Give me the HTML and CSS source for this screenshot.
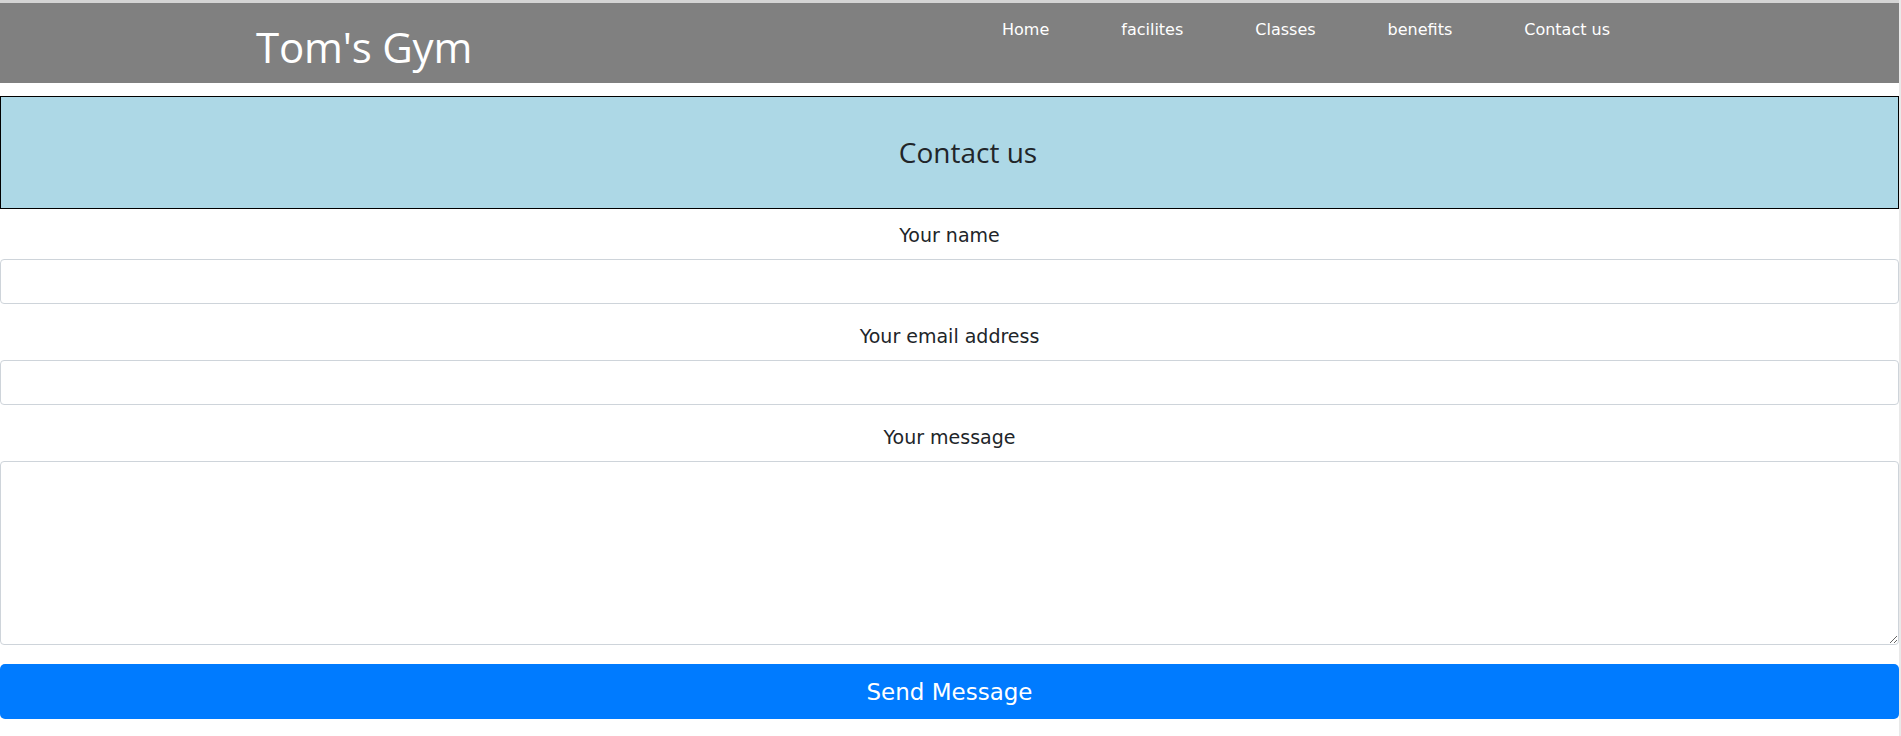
FILE: index.html
```html
<!DOCTYPE html>
<html lang="en">
<head>
<meta charset="utf-8">
<title>Tom's Gym - Contact us</title>
<link rel="stylesheet" href="styles.css">
</head>
<body>
<div class="page">
  <header class="site-header">
    <div class="logo">Tom's Gym</div>
    <nav class="nav">
      <a href="#">Home</a>
      <a href="#">facilites</a>
      <a href="#">Classes</a>
      <a href="#">benefits</a>
      <a href="#">Contact us</a>
    </nav>
  </header>
  <section class="banner">
    <h2 class="banner-title">Contact us</h2>
  </section>
  <form class="contact-form">
    <div class="group">
      <label class="label" for="name">Your name</label>
      <input class="field" id="name" type="text">
    </div>
    <div class="group">
      <label class="label" for="email">Your email address</label>
      <input class="field" id="email" type="email">
    </div>
    <div class="group">
      <label class="label" for="msg">Your message</label>
      <textarea class="field area" id="msg"></textarea>
    </div>
    <button class="send" type="button">Send Message</button>
  </form>
</div>
</body>
</html>
```
FILE: styles.css
```css
html, body {
  margin: 0;
  padding: 0;
}
body {
  background: #e9e9e9;
  font-family: "DejaVu Sans", Verdana, sans-serif;
  color: #212529;
}
.page {
  width: 1899px;
  min-height: 736px;
  background: #fff;
}
.site-header {
  box-sizing: border-box;
  height: 83px;
  border-top: 3px solid #d4d4d4;
  background: #808080;
  display: grid;
  grid-template-columns: 746px auto;
  align-items: start;
  padding-left: 256px;
  padding-top: 15px;
}
.logo {
  font-family: "Open Sans", sans-serif;
  font-size: 42px;
  letter-spacing: -0.2px;
  color: #fff;
  line-height: normal;
}
.nav {
  display: flex;
  gap: 72px;
  margin-top: 2px;
}
.nav a {
  color: #fff;
  text-decoration: none;
  font-family: "DejaVu Sans", Verdana, sans-serif;
  font-size: 16px;
  line-height: normal;
}
.banner {
  margin-top: 13px;
  box-sizing: border-box;
  height: 113px;
  border: 1px solid #000;
  background: #add8e6;
  display: flex;
  align-items: center;
  justify-content: center;
  padding-left: 37px;
}
.banner-title {
  margin: 0;
  font-family: "Open Sans", sans-serif;
  font-size: 28px;
  font-weight: 400;
  color: #212529;
  line-height: 1.2;
}
.contact-form {
  margin-top: 13px;
  display: flex;
  flex-direction: column;
}
.group {
  display: flex;
  flex-direction: column;
  margin-bottom: 19px;
}
.label {
  display: block;
  text-align: center;
  font-size: 19px;
  line-height: 27px;
  margin-bottom: 10px;
}
.field {
  box-sizing: border-box;
  width: 100%;
  height: 45px;
  margin: 0;
  border: 1px solid #ced4da;
  border-radius: 4px;
  background: #fff;
  font-family: "DejaVu Sans", sans-serif;
  font-size: 16px;
  padding: 6px 12px;
}
.area {
  height: 184px;
  resize: both;
}
.send {
  box-sizing: border-box;
  width: 100%;
  height: 55px;
  border: none;
  border-radius: 5px;
  background: #007bff;
  color: #fff;
  font-family: "DejaVu Sans", sans-serif;
  font-size: 23px;
  padding: 0;
}
```
